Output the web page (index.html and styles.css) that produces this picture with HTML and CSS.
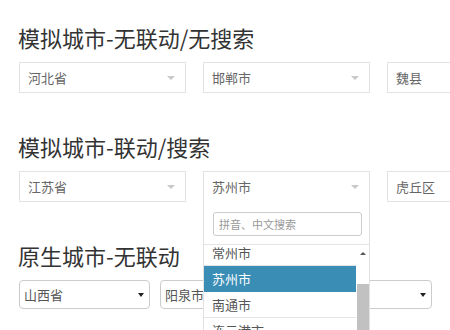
FILE: index.html
```html
<!DOCTYPE html>
<html lang="zh-CN">
<head>
    <meta charset="UTF-8">
    <meta name="viewport" content="width=device-width, initial-scale=1.0">
    <title>城市选择</title>
    <link rel="stylesheet" href="styles.css">
</head>
<body>
    <div class="page">
        <section class="demo">
            <h3 class="demo-title">模拟城市-无联动/无搜索</h3>
            <div class="select-row">
                <div class="fake-select"><span class="value">河北省</span><i class="caret"></i></div>
                <div class="fake-select"><span class="value">邯郸市</span><i class="caret"></i></div>
                <div class="fake-select"><span class="value">魏县</span><i class="caret"></i></div>
            </div>
        </section>

        <section class="demo">
            <h3 class="demo-title">模拟城市-联动/搜索</h3>
            <div class="select-row">
                <div class="fake-select"><span class="value">江苏省</span><i class="caret"></i></div>
                <div class="fake-select is-open">
                    <span class="value">苏州市</span><i class="caret"></i>
                    <div class="dropdown">
                        <div class="dropdown-search">
                            <input type="text" placeholder="拼音、中文搜索">
                        </div>
                        <div class="dropdown-body">
                            <ul class="options">
                                <li>常州市</li>
                                <li class="active">苏州市</li>
                                <li>南通市</li>
                                <li>连云港市</li>
                            </ul>
                            <div class="scrollbar">
                                <i class="scroll-up"></i>
                                <div class="scroll-thumb"></div>
                            </div>
                        </div>
                    </div>
                </div>
                <div class="fake-select"><span class="value">虎丘区</span><i class="caret"></i></div>
            </div>
        </section>

        <section class="demo">
            <h3 class="demo-title">原生城市-无联动</h3>
            <div class="native-row">
                <div class="native-select province"><span class="value">山西省</span><i class="caret-dark"></i></div>
                <div class="native-select city"><span class="value">阳泉市</span><i class="caret-dark"></i></div>
            </div>
        </section>
    </div>
</body>
</html>
```

FILE: styles.css
```css
html, body {
    margin: 0;
    overflow: hidden;
}
body {
    font-family: "Noto Sans CJK SC", "Noto Sans", sans-serif;
    color: #333;
    background: #fff;
}
.page {
    padding: 24px 0 0 19px;
}
.demo {
    margin-bottom: 40px;
}
.demo-title {
    margin: 0 0 12px -1px;
    font-size: 22px;
    font-weight: normal;
    line-height: 26px;
    color: #333;
}
.select-row {
    display: flex;
    gap: 17px;
}
.fake-select {
    flex: none;
    position: relative;
    width: 167px;
    height: 31px;
    box-sizing: border-box;
    border: 1px solid #e2e2e2;
    display: flex;
    align-items: center;
    padding: 0 10px 0 8px;
    font-size: 13px;
    color: #666;
    background: #fff;
}
.value {
    flex: 1;
    white-space: nowrap;
}
.caret {
    width: 0;
    height: 0;
    border-left: 4px solid transparent;
    border-right: 4px solid transparent;
    border-top: 4px solid #c8c8c8;
}
.dropdown {
    position: absolute;
    top: 100%;
    left: -1px;
    right: -1px;
    z-index: 2;
    background: #fff;
    border: 1px solid #e2e2e2;
    border-top: none;
}
.dropdown-search {
    padding: 11px 7px 8px 9px;
    border-bottom: 1px solid #e5e5e5;
}
.dropdown-search input {
    display: block;
    width: 100%;
    height: 24px;
    box-sizing: border-box;
    border: 1px solid #ccc;
    border-radius: 3px;
    padding: 0 5px;
    font-family: inherit;
    font-size: 11px;
    outline: none;
}
.dropdown-search input::placeholder {
    color: #999;
}
.dropdown-body {
    display: flex;
    height: 90px;
}
.options {
    flex: 1;
    margin: 0;
    padding: 0;
    list-style: none;
    overflow: hidden;
}
.options li {
    height: 26px;
    box-sizing: border-box;
    line-height: 25px;
    padding-left: 8px;
    border-bottom: 1px solid #e5e5e5;
    font-size: 13px;
    color: #555;
}
.options li:first-child {
    margin-top: -5px;
}
.options li.active {
    background: #3a8db5;
    border-bottom-color: #3a8db5;
    color: #fff;
}
.scrollbar {
    width: 13px;
    display: flex;
    flex-direction: column;
    align-items: center;
}
.scroll-up {
    margin-top: 7px;
    width: 0;
    height: 0;
    border-left: 3px solid transparent;
    border-right: 3px solid transparent;
    border-bottom: 3px solid #555;
}
.scroll-thumb {
    margin-top: 29px;
    width: 12px;
    flex: 1;
    background: #c1c1c1;
}
.native-row {
    display: flex;
    gap: 10px;
    margin-top: 7px;
}
.native-select {
    height: 29px;
    box-sizing: border-box;
    border: 1px solid #ccc;
    border-radius: 4px;
    display: flex;
    align-items: center;
    padding: 0 5px 0 4px;
    font-size: 13px;
    color: #555;
}
.native-select.province {
    width: 131px;
}
.native-select.city {
    width: 272px;
}
.caret-dark {
    width: 0;
    height: 0;
    border-left: 3px solid transparent;
    border-right: 3px solid transparent;
    border-top: 4px solid #222;
}
```
